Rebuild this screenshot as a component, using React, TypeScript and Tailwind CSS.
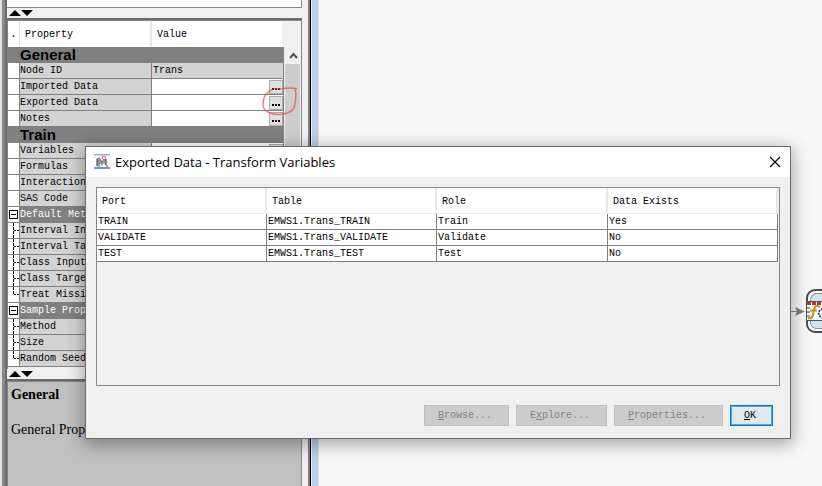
import React from "react";

type Row = {
  label: string;
  kind?: "section" | "group" | "child" | "last";
  value?: string;
  button?: boolean;
};

const rows: Row[] = [
  { label: "General", kind: "section" },
  { label: "Node ID", value: "Trans" },
  { label: "Imported Data", button: true },
  { label: "Exported Data", button: true },
  { label: "Notes", button: true },
  { label: "Train", kind: "section" },
  { label: "Variables", button: true },
  { label: "Formulas", button: true },
  { label: "Interaction", button: true },
  { label: "SAS Code", button: true },
  { label: "Default Met", kind: "group" },
  { label: "Interval In", kind: "child" },
  { label: "Interval Ta", kind: "child" },
  { label: "Class Input", kind: "child" },
  { label: "Class Targe", kind: "child" },
  { label: "Treat Missi", kind: "last" },
  { label: "Sample Prop", kind: "group" },
  { label: "Method", kind: "child" },
  { label: "Size", kind: "child" },
  { label: "Random Seed", kind: "last" },
];

const ports = [
  ["TRAIN", "EMWS1.Trans_TRAIN", "Train", "Yes"],
  ["VALIDATE", "EMWS1.Trans_VALIDATE", "Validate", "No"],
  ["TEST", "EMWS1.Trans_TEST", "Test", "No"],
];

const mono =
  "font-['Liberation_Mono','Courier_New',monospace] text-[10px] leading-[15px]";

function Splitter() {
  return (
    <div className="flex h-[12px] shrink-0 items-center border-b-2 border-[#6b6b6b] bg-[#f0f0f0] pl-[2px]">
      <button aria-label="Collapse up" className="block">
        <svg width="12" height="6" viewBox="0 0 12 6" className="block">
          <path d="M0 6 L6 0 L12 6Z" fill="#000" />
        </svg>
      </button>
      <button aria-label="Collapse down" className="block">
        <svg width="12" height="6" viewBox="0 0 12 6" className="block">
          <path d="M0 0 H12 L6 6Z" fill="#000" />
        </svg>
      </button>
    </div>
  );
}

function Gutter({ kind }: { kind?: Row["kind"] }) {
  if (kind === "group") {
    return (
      <button aria-label="Collapse group" className="ml-px block">
        <svg width="9" height="15" viewBox="0 0 9 15" className="block">
          <rect x="0.5" y="3.5" width="8" height="8" fill="#fff" stroke="#000" />
          <path d="M2 7.5H7" stroke="#000" />
        </svg>
      </button>
    );
  }
  if (kind === "child" || kind === "last") {
    return (
      <svg width="11" height="15" viewBox="0 0 11 15" className="block">
        <path
          d={kind === "last" ? "M5.5 0V8" : "M5.5 0V15"}
          stroke="#000"
          strokeDasharray="3 1"
        />
        <path d="M6 7.5H11" stroke="#000" strokeDasharray="2 1" />
      </svg>
    );
  }
  return null;
}

function PropertyRow({ row }: { row: Row }) {
  if (row.kind === "section") {
    return (
      <tr className="bg-[#808080]">
        <td className="h-4" />
        <th
          colSpan={2}
          scope="rowgroup"
          className="h-4 p-0 text-left font-['Liberation_Sans',Arial,sans-serif] text-[15px] leading-4 font-bold"
        >
          {row.label}
        </th>
      </tr>
    );
  }
  const group = row.kind === "group";
  return (
    <tr>
      <td className="h-4 border-r border-b border-[#808080] bg-white p-0">
        <Gutter kind={row.kind} />
      </td>
      <td
        className={
          group
            ? "h-4 overflow-hidden border-b border-[#808080] bg-[#808080] p-0 whitespace-nowrap text-white"
            : "h-4 overflow-hidden border-r border-b border-[#808080] bg-[#d3d3d3] p-0 whitespace-nowrap"
        }
      >
        {row.label}
      </td>
      <td
        className={
          group
            ? "h-4 bg-[#808080] p-0"
            : row.value
              ? "h-4 border-r border-b border-[#808080] bg-[#d3d3d3] p-0 pl-px"
              : "h-4 border-r border-b border-[#808080] bg-white p-0"
        }
      >
        {row.value}
        {row.button && (
          <button
            aria-label={`Edit ${row.label}`}
            className="ml-auto flex h-[14px] w-[14px] items-end justify-center gap-px border border-[#adadad] bg-[#e1e1e1] pb-[3px]"
          >
            <span className="h-[2px] w-[2px] bg-black" />
            <span className="h-[2px] w-[2px] bg-black" />
            <span className="h-[2px] w-[2px] bg-black" />
          </button>
        )}
      </td>
    </tr>
  );
}

function PropertySheet() {
  return (
    <section className="flex h-[349px] shrink-0 overflow-hidden border-t border-r border-l border-[#828790] bg-[#f0f0f0]">
      <div className="min-w-0 flex-1">
        <table className={`w-full table-fixed border-separate border-spacing-0 ${mono}`}>
          <colgroup>
            <col className="w-[12px]" />
            <col className="w-[132px]" />
            <col />
          </colgroup>
          <thead>
            <tr className="bg-white text-left">
              <th className="h-[26px] border-r border-[#e0e0e0] p-0 text-center font-normal">.</th>
              <th className="h-[26px] border-r-2 border-[#e8e8e8] p-0 pl-[5px] font-normal">Property</th>
              <th className="h-[26px] border-r-2 border-[#f0f0f0] p-0 pl-[5px] font-normal">Value</th>
            </tr>
          </thead>
          <tbody>
            {rows.map((row) => (
              <PropertyRow key={row.label} row={row} />
            ))}
          </tbody>
        </table>
      </div>
      <div className="ml-px flex w-4 flex-col pt-[26px]">
        <button aria-label="Scroll up" className="flex h-[17px] items-center justify-center">
          <svg width="9" height="8" viewBox="0 0 9 8">
            <path d="M1 6 L4.5 2 L8 6" fill="none" stroke="#505050" strokeWidth="2" />
          </svg>
        </button>
        <div className="mr-px flex-1 bg-[#cdcdcd]" />
      </div>
    </section>
  );
}

function MinerIcon() {
  return (
    <svg width="16" height="16" viewBox="0 0 16 16" className="block">
      <rect width="16" height="1.5" y="0" fill="#8cb4e8" />
      <rect width="16" height="2" y="13" fill="#5d9be0" />
      <path d="M2 12V5L5 3 8 7 10 4 13 5V11L16 14H13L10 9 8 12 6 9V13Z" fill="#989898" />
      <path d="M3.5 5V12M6 5 8 9M11.5 6V11" stroke="#6c7074" fill="none" />
      <circle cx="10" cy="3.8" r="1.8" fill="#fff" stroke="#e25555" />
    </svg>
  );
}

function ExportedDataDialog() {
  return (
    <div
      role="dialog"
      aria-labelledby="dialog-title"
      className="absolute top-[146px] right-[31px] left-[85px] border border-[#6b6b6b] bg-[#f0f0f0] shadow-[0_4px_16px_2px_rgba(0,0,0,0.32)]"
    >
      <header className="flex h-[30px] items-center bg-white pr-[9px] pl-2">
        <MinerIcon />
        <h1
          id="dialog-title"
          className="ml-[5px] flex-1 font-['Open_Sans','Noto_Sans',sans-serif] text-[13px] leading-4"
        >
          Exported Data - Transform Variables
        </h1>
        <button aria-label="Close">
          <svg width="12" height="12" viewBox="0 0 12 12" className="block">
            <path d="M1 1 11 11M11 1 1 11" stroke="#000" strokeWidth="1.2" />
          </svg>
        </button>
      </header>

      <div className="mx-[10px] mt-[10px] h-[199px] border border-[#828790] pr-px">
        <table className={`w-full table-fixed border-separate border-spacing-0 bg-white ${mono}`}>
          <colgroup>
            <col className="w-[170px]" />
            <col className="w-[170px]" />
            <col className="w-[171px]" />
            <col />
          </colgroup>
          <thead>
            <tr className="text-left">
              {["Port", "Table", "Role", "Data Exists"].map((name) => (
                <th
                  key={name}
                  className="h-[26px] border-r-2 border-b border-[#e8e8e8] p-0 pt-px pl-[5px] font-normal"
                >
                  {name}
                </th>
              ))}
            </tr>
          </thead>
          <tbody>
            {ports.map((port) => (
              <tr key={port[0]}>
                {port.map((cell, i) => (
                  <td key={i} className="h-4 border-r border-b border-[#808080] p-0 pl-px">
                    {cell}
                  </td>
                ))}
              </tr>
            ))}
          </tbody>
        </table>
      </div>

      <footer className={`flex justify-end gap-[7px] pt-[19px] pr-[17px] pb-[12px] ${mono}`}>
        <button disabled className="h-[21px] w-[85px] border border-[#bfbfbf] bg-[#cccccc] pr-[3px] text-[#838383]">
          <u>B</u>rowse...
        </button>
        <button disabled className="h-[21px] w-[91px] border border-[#bfbfbf] bg-[#cccccc] pr-[3px] text-[#838383]">
          E<u>x</u>plore...
        </button>
        <button disabled className="h-[21px] w-[109px] border border-[#bfbfbf] bg-[#cccccc] pr-[3px] text-[#838383]">
          <u>P</u>roperties...
        </button>
        <button className="h-[21px] w-[43px] border border-[#0078d7] bg-[#e1e8ee] pr-[3px] ring-1 ring-[#5aa7e6] ring-inset">
          <u>O</u>K
        </button>
      </footer>
    </div>
  );
}

function DiagramNode() {
  return (
    <svg
      width="48"
      height="46"
      viewBox="0 0 48 46"
      className="absolute top-[288px] left-[471px]"
      role="img"
      aria-label="Transform Variables node"
    >
      <path d="M0 23.5H8" stroke="#808080" />
      <path d="M5 19 15 23.5 5 28 7 23.5Z" fill="#808080" />
      <rect x="17" y="2" width="44" height="42" rx="8" fill="#fff" stroke="#4c4c4c" strokeWidth="2" />
      <rect x="20.5" y="5.5" width="38" height="35" rx="6" fill="#d3e2f1" stroke="#808890" />
      <rect x="17" y="13" width="31" height="19" fill="#fff" />
      <path d="M16 13.5H48M16 32.5H48" stroke="#555" />
      <path d="M17 15.5H48" stroke="#b5343c" strokeWidth="3" strokeDasharray="4 1" />
      <path d="M17 20H20M17 24H20M17 28H20" stroke="#999" strokeWidth="2" />
      <path d="M18 30C23 32 23 26 24 22C25 17 27 17 30 19M20 22.5H27" fill="none" stroke="#c9930a" strokeWidth="2" />
      <path d="M33 21C28 22 27 27 32 30" fill="none" stroke="#1846b8" strokeWidth="2" strokeDasharray="2 1" />
    </svg>
  );
}

export default function App() {
  return (
    <main className="relative flex h-screen overflow-hidden bg-[#f8f8f8] text-black">
      <aside className="flex w-[319px] shrink-0 bg-[#f0f0f0]">
        <div className="w-[2px] bg-[#e3e3e3]" />
        <div className="w-[3px] bg-[#8a8a8a]" />
        <div className="w-[2px] bg-[#6b6b6b]" />
        <div className="flex w-[295px] flex-col">
          <div className="h-[8px] shrink-0 border-r border-b border-[#828790] bg-white" />
          <Splitter />
          <PropertySheet />
          <Splitter />
          <div className="flex-1 border-t border-r border-l border-[#828790] bg-[#c0c0c0] px-[3px] pt-1 font-['Liberation_Serif','Times_New_Roman',serif] text-[14px] leading-[18px]">
            <h2 className="font-bold">General</h2>
            <p className="mt-[17px]">General Prop</p>
          </div>
        </div>
        <div className="flex-1" />
        <div className="w-[2px] bg-[#808080]" />
        <div className="w-px bg-black" />
        <div className="w-px bg-[#f0f0f0]" />
        <div className="w-[6px] bg-[#b8d0e8]" />
        <div className="w-px bg-[#dddddd]" />
      </aside>
      <section aria-label="Diagram" className="relative flex-1">
        <DiagramNode />
      </section>
      <svg
        width="40"
        height="32"
        viewBox="0 0 40 32"
        className="absolute top-[85px] left-[260px]"
        aria-hidden="true"
      >
        <path
          d="M37 4C32 2 26 3 20 4C14 2 6 7 4 13C2 20 3 25 8 27C13 30 18 30 23 29C30 28 35 25 35 18C36 12 37 6 34 3"
          fill="none"
          stroke="#f04848"
          strokeOpacity="0.7"
          strokeWidth="1.5"
        />
      </svg>
      <ExportedDataDialog />
    </main>
  );
}
